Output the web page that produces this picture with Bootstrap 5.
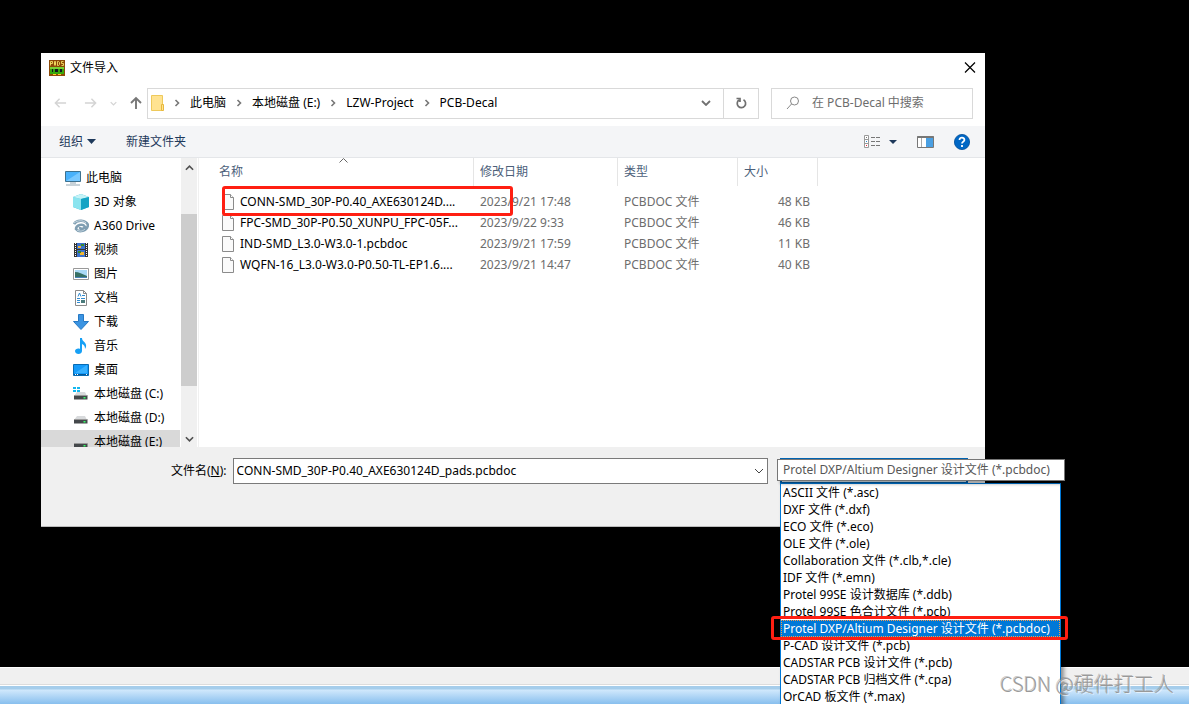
<!DOCTYPE html>
<html lang="zh-CN">
<head>
<meta charset="utf-8">
<meta name="viewport" content="width=device-width, initial-scale=1">
<title>文件导入</title>
<link href="https://cdn.jsdelivr.net/npm/bootstrap@5.3.0/dist/css/bootstrap.min.css" rel="stylesheet">
<style>
  body { font: 12px/16px "Noto Sans", "Noto Sans CJK SC", sans-serif; color: #000; background: #000; }
  svg { display: block; flex: none; }
  button { font: inherit; }
  .desktop { height: 100vh; }
  .import-window { margin: 53px 204px 0 41px; background: #fff; }
  .title-bar { height: 30px; padding: 0 8px; gap: 5px; }
  .nav-row { height: 43px; padding: 5px 12px 8px 13px; }
  .plain-btn { border: 0; padding: 0; background: none; color: inherit; }
  .nav-arrows { width: 93px; gap: 13px; }
  .address { border: 1px solid #d9d9d9; height: 31px; }
  .address .breadcrumb { gap: 10px; padding-left: 3px; }
  .address a, .tree a, .files a { color: inherit; text-decoration: none; }
  .address .refresh { width: 35px; border-left: 1px solid #d9d9d9; }
  .search { width: 202px; height: 31px; border: 1px solid #d9d9d9; margin-left: 12px; padding-left: 14px; gap: 12px; }
  .search input, .file-box input { min-width: 0; border: 0; outline: 0; padding: 0; background: none; font: inherit; color: #000; }
  .search input::placeholder { color: #6d6d6d; opacity: 1; }
  .command-bar { height: 32px; padding: 0 15px 0 18px; gap: 30px; background: #f4f5f7; border-bottom: 1px solid #e4e6e9; color: #1e395b; }
  .browser { height: 289px; }
  .tree-pane { flex: none; width: 139px; padding-top: 8px; }
  .tree a { height: 24px; padding-left: 32px; gap: 5px; white-space: nowrap; }
  .tree .root a { padding-left: 24px; }
  .tree .current { background: #d9d9d9; }
  .scroll-track { flex: none; width: 16px; background: #f0f0f0; margin: 0 1px; color: #505050; padding: 7px 0 5px; }
  .scroll-thumb { height: 172px; margin-top: 43px; background: #cdcdcd; }
  .file-pane { min-width: 0; border-left: 1px solid #f0f0f0; }
  .files { table-layout: fixed; width: 100%; color: #6d6d6d; }
  .files th { font-weight: 400; padding: 0 0 5px; color: #4c607a; }
  .files th span { display: block; height: 28px; padding: 6px 0 0 6px; border-right: 1px solid #e5e5e5; }
  .files th:first-child span { padding-left: 20px; }
  .files th:last-child span { border: 0; }
  .files td { height: 21px; padding: 0 0 0 6px; white-space: nowrap; }
  .files td:first-child { padding-left: 23px; color: #000; }
  .files td a { gap: 6px; }
  .files td.size { text-align: right; padding-right: 8px; }
  .col-name { width: 275px; } .col-date { width: 144px; } .col-type { width: 120px; } .col-size { width: 80px; }
  .sort-mark { top: 0; left: 140px; }
  .footer-bar { height: 80px; padding: 11px 17px 0 130px; background: #f0f0f0; border-bottom: 1px solid #bbb; }
  .footer-bar label { padding-top: 5px; }
  .file-box { height: 26px; border: 1px solid #7a7a7a; background: #fff; margin: 0 12px 0 6px; padding: 0 3px; }
  .filter { width: 188px; }
  .filter select { width: 100%; height: 26px; border: 2px solid #0063b1; background: #e5f1fb; font: inherit; appearance: none; border-radius: 0; padding: 0 4px; }
  .filter .dropdown-menu { top: 25px; left: 0; width: 281px; margin: 0; padding: 0; border: 1px solid #0078d7; border-radius: 0; font-size: 12px; color: #000; --bs-dropdown-item-padding-x: 2px; --bs-dropdown-item-padding-y: 0px; box-shadow: 3px 3px 4px #0006; }
  .filter .dropdown-item { height: 17px; line-height: 17px; color: #000; }
  .filter .dropdown-item.active { background: #0078d7; color: #fff; outline: 1px dotted #f79b4b; outline-offset: -1px; }
  .filter-tip { top: 1px; left: -3px; width: 288px; height: 22px; padding: 2px 5px; border: 1px solid #767676; background: #fff; color: #575757; white-space: nowrap; z-index: 1010; box-shadow: 3px 3px 3px #0005; }
  .callout { border: 3px solid #ff1f12; border-radius: 3px; pointer-events: none; z-index: 1020; }
  .callout-file { top: 28px; left: 23px; width: 291px; height: 30px; }
  .callout-type { top: 158px; left: -9px; width: 297px; height: 24px; }
  .under-status { height: 18px; background: #f0f0f0; border-top: 1px solid #fff; border-bottom: 1px solid #dcdcdc; }
  .under-task { height: 19px; background: linear-gradient(#fff 0 1px, #a5cdeb 1px 4px, #d0e8fc 5px, #88bfee); }
  .watermark { right: 15px; bottom: 8px; font: 20px/24px "Noto Sans CJK SC", sans-serif; font-weight: 300; color: #999; text-shadow: 1px 1px 0 #fff8, -1px -1px 0 #7776; z-index: 1030; }
</style>
</head>
<body>
<svg class="d-none" xmlns="http://www.w3.org/2000/svg">
  <symbol id="sep" viewBox="0 0 6 8"><path d="M1.500 1 4.500 4 1.500 7" fill="none" stroke="#777" stroke-width="1.600"/></symbol>
  <symbol id="doc" viewBox="0 0 12 16"><path d="M.5.500h8l3 3v12H.5z" fill="#fafafa" stroke="#8b8b8b"/><path d="M8.500.500v3h3" fill="#fff" stroke="#8b8b8b"/></symbol>
  <symbol id="chev" viewBox="0 0 10 6"><path d="m1 1 4 4 4-4" fill="none" stroke="currentColor" stroke-width="1.800"/></symbol>
  <symbol id="drive" viewBox="0 0 16 16"><path d="M4 6h8l2 4H1z" fill="#d8dadc"/><path d="M1 9.500h13.500v4H1z" fill="#44484b"/><path d="M1 9.500h13.500" stroke="#999"/><path d="M10.500 11h2v1.500h-2z" fill="#3f6"/></symbol>
</svg>
<div class="desktop d-flex flex-column position-relative overflow-hidden">
  <main class="import-window">
    <header class="title-bar d-flex align-items-center">
      <svg width="16" height="16" viewBox="0 0 16 16" role="img" aria-label="PADS"><path fill="#8d4a08" d="M0 0h16v16H0z"/><path d="M1.500 5.500v-4h2v2h-2M5.500 5.500v-4h1v4M5.500 3.500h1M8.500 1.500v4h1l1-1v-2l-1-1zM14.500 1.500h-2v2h2v2h-2" fill="none" stroke="#fff36d" stroke-width=".8"/><path d="M1 7h14v7H1z" fill="#36a80d"/><path d="M1 7h14v2H1z" fill="#77d335"/><path d="M3 9h1v3H3zM6 9h3v3H6zM11 9h2v3h-2z" fill="#101820"/><path d="M4 14h3v1H4zm5 0h3v1H9z" fill="#ffd22b"/></svg>
      <span>文件导入</span>
      <button class="plain-btn ms-auto" aria-label="关闭"><svg width="14" height="12" viewBox="0 0 14 12"><path d="m2 .500 10 10M12 .500l-10 10" stroke="#000" stroke-width="1.200"/></svg></button>
    </header>

    <div class="nav-row d-flex align-items-center">
      <nav class="nav-arrows d-flex align-items-center" aria-label="导航">
        <button class="plain-btn" aria-label="后退"><svg width="13" height="12" viewBox="0 0 14 12"><path d="M13 6H2M6 1.500 1.500 6 6 10.500" fill="none" stroke="#d4d4d4" stroke-width="1.600"/></svg></button>
        <button class="plain-btn ms-1" aria-label="前进"><svg width="13" height="12" viewBox="0 0 14 12"><path d="M1 6h11M8 1.500 12.500 6 8 10.500" fill="none" stroke="#d4d4d4" stroke-width="1.600"/></svg></button>
        <button class="plain-btn" aria-label="最近位置"><svg width="7" height="5" style="color:#d4d4d4"><use href="#chev"/></svg></button>
        <button class="plain-btn" aria-label="上移"><svg width="12" height="14" viewBox="0 0 12 14"><path d="M6 13V2M1 7l5-5 5 5" fill="none" stroke="#777" stroke-width="1.900"/></svg></button>
      </nav>
      <div class="address d-flex flex-fill align-items-stretch">
        <ol class="breadcrumb flex-fill align-items-center mb-0">
          <li><svg width="13" height="16" viewBox="0 0 13 16"><path d="M.5.500h11v15H.5z" fill="#ffe391" stroke="#eec95b"/><path d="M10.500 9.500h2v6h-2z" fill="#ffe391" stroke="#e8b93c"/></svg></li>
          <li><svg width="6" height="8"><use href="#sep"/></svg></li>
          <li><a href="#">此电脑</a></li>
          <li><svg width="6" height="8"><use href="#sep"/></svg></li>
          <li><a href="#">本地磁盘 (E:)</a></li>
          <li><svg width="6" height="8"><use href="#sep"/></svg></li>
          <li><a href="#">LZW-Project</a></li>
          <li><svg width="6" height="8"><use href="#sep"/></svg></li>
          <li><a href="#" aria-current="page">PCB-Decal</a></li>
        </ol>
        <button class="plain-btn px-2 me-1" aria-label="历史"><svg width="10" height="6" style="color:#707070"><use href="#chev"/></svg></button>
        <button class="refresh plain-btn d-flex align-items-center justify-content-center" aria-label="刷新"><svg width="12" height="12" viewBox="0 0 12 12"><path d="M8.500 2.800a4.200 4.200 0 1 1-4.500.200M1.500 1.500H5V5" fill="none" stroke="#707070" stroke-width="1.700"/></svg></button>
      </div>
      <div class="search d-flex align-items-center">
        <svg width="14" height="14" viewBox="0 0 14 14"><circle cx="8.500" cy="5" r="4" fill="none" stroke="#888"/><path d="M5.500 8 1 13" stroke="#888"/></svg>
        <input type="search" class="flex-fill" placeholder="在 PCB-Decal 中搜索" aria-label="搜索">
      </div>
    </div>

    <div class="command-bar d-flex align-items-center">
      <button class="plain-btn d-flex align-items-center gap-1">组织 <svg width="9" height="5" viewBox="0 0 9 5"><path d="M0 0h9L4.500 5z" fill="#1e395b"/></svg></button>
      <button class="plain-btn">新建文件夹</button>
      <div class="d-flex align-items-center ms-auto">
        <button class="plain-btn d-flex align-items-center gap-2" aria-label="更改视图">
          <svg width="17" height="13" viewBox="0 0 17 13"><path d="M.5.500h4v12h-4zM.5 4.500h4M.5 8.500h4" fill="#fff" stroke="#999"/><path d="M7 2.500h4m1 0h4M7 6.500h4m1 0h4M7 10.500h4m1 0h4" stroke="#777"/><path d="M2 2h1v1H2z" fill="#777"/><path d="M2 6h1v1H2z" fill="#2b8ad6"/><path d="M2 10h1v1H2z" fill="#e23"/></svg>
          <svg width="8" height="4" viewBox="0 0 8 4"><path d="M0 0h8L4 4z" fill="#1e395b"/></svg>
        </button>
        <button class="plain-btn mx-3 px-1" aria-label="预览窗格"><svg width="17" height="12" viewBox="0 0 17 12"><path d="M.5.500h16v11H.5z" fill="#fff" stroke="#777"/><path d="M.5 1h16" stroke="#777" stroke-width="2"/><path d="M4.500 2v9" stroke="#aaa"/><path d="M9 2h7v9H9z" fill="#4a9fe2"/></svg></button>
        <button class="plain-btn" aria-label="帮助"><svg width="16" height="16" viewBox="0 0 16 16"><circle cx="8" cy="8" r="7.600" fill="#0067c5" stroke="#004e98" stroke-width=".8"/><path d="M5.500 6C5.500 2.700 10.500 3 10.400 5.900 10.400 7.500 8 7.700 8 9.500M8 11v2" fill="none" stroke="#fff" stroke-width="1.800"/></svg></button>
      </div>
    </div>

    <div class="browser d-flex">
      <nav class="tree-pane overflow-hidden" aria-label="文件夹">
        <ul class="tree list-unstyled mb-0">
          <li class="root"><a href="#" class="d-flex align-items-center"><svg width="16" height="16" viewBox="0 0 16 16"><path d="M.5 1.500h15v10H.5z" fill="#48b1fb" stroke="#3d718f"/><path d="M1 11 15 2v9z" fill="#78c8ff"/><path d="M5 13h6M1 15h14" stroke="#92a6b2"/></svg>此电脑</a></li>
          <li><a href="#" class="d-flex align-items-center"><svg width="16" height="16" viewBox="0 0 16 16"><path d="m8 0 8 3v10l-8 3-8-3V3z" fill="#31bcd8"/><path d="m0 3 8 2v11l-8-3z" fill="#8be4ef"/><path d="m0 3 8-3 8 3-8 2z" fill="#c5f3f7"/><path d="m8 5 8-2v10l-8 3z" fill="#14a3c4"/></svg>3D 对象</a></li>
          <li><a href="#" class="d-flex align-items-center"><svg width="16" height="16" viewBox="0 0 16 16"><path d="M1 6c3-5 12-4 14 1-1 6-9 8-12 4 0-4 7-6 9-2-2 3-5 2-5 0" fill="none" stroke="#7f9eb2" stroke-width="2.600"/><path d="M1 5c4-3 9-3 12 0M4 12c3 2 6 1 8-1" fill="none" stroke="#c8d8e2"/></svg>A360 Drive</a></li>
          <li><a href="#" class="d-flex align-items-center"><svg width="16" height="16" viewBox="0 0 16 16"><path fill="#333" d="M1 1h14v14H1z"/><path d="M2.500 1v14M13.500 1v14" stroke="#fff" stroke-dasharray="1 1"/><path d="M4 1h8v6H4zm0 7h8v7H4z" fill="#3c72ce"/><path d="M5 4h3v2H5zm2 6h4v3H7z" fill="#f2b632"/><path d="M8 2h3v2H8zM5 9h3v2H5z" fill="#398b2f"/></svg>视频</a></li>
          <li><a href="#" class="d-flex align-items-center"><svg width="16" height="16" viewBox="0 0 16 16"><path d="M.5 2.500h15v11H.5z" fill="#fff" stroke="#999"/><path d="M2 4h12v8H2z" fill="#a9d9f6"/><path d="M2 6c4 0 7 2 12 4v2H2z" fill="#377065"/><path d="M2 11h12v1H2z" fill="#4a83ba"/></svg>图片</a></li>
          <li><a href="#" class="d-flex align-items-center"><svg width="16" height="16" viewBox="0 0 16 16"><path d="M2.500.500h8l3 3v12h-11z" fill="#fff" stroke="#8a8a8a"/><path d="M10.500.500v3h3" fill="none" stroke="#8a8a8a"/><path d="M5 6.500 6.500 3 8 6.500M9 5.500h3M4 8.500h3m1 0h4M4 10.500h3M4 12.500h3" fill="none" stroke="#318bd0"/><path d="M8 10h4v3H8z" fill="#497b7b"/></svg>文档</a></li>
          <li><a href="#" class="d-flex align-items-center"><svg width="16" height="16" viewBox="0 0 16 16"><path d="M5.500.500h5v7h5L8 15.500.5 7.500h5z" fill="#3b94e2" stroke="#2679c4"/></svg>下载</a></li>
          <li><a href="#" class="d-flex align-items-center"><svg width="16" height="16" viewBox="0 0 16 16"><path d="M7 0h2c0 4 5 4 4 9l-1 2c0-3-1-4-3-5v7c0 4-7 4-7 0 0-2 3-3 5-2z" fill="#16a0f5"/></svg>音乐</a></li>
          <li><a href="#" class="d-flex align-items-center"><svg width="16" height="16" viewBox="0 0 16 16"><path d="M.5 2.500h15v11H.5z" fill="#159bfa" stroke="#086bb3"/><path d="M2 11 14 3v8z" fill="#38b1ff"/><path d="M1 12.500h14" stroke="#075896"/><path d="M2 12.500h1m1 0h1m8 0h1" stroke="#fff"/></svg>桌面</a></li>
          <li><a href="#" class="d-flex align-items-center"><svg width="16" height="16" viewBox="0 0 16 16"><use href="#drive"/><path d="M0 1h3v2H0zm4 0h3v2H4zM0 4h3v2H0zm4 0h3v2H4z" fill="#12b7ef"/></svg>本地磁盘 (C:)</a></li>
          <li><a href="#" class="d-flex align-items-center"><svg width="16" height="16"><use href="#drive"/></svg>本地磁盘 (D:)</a></li>
          <li class="current"><a href="#" class="d-flex align-items-center"><svg width="16" height="16"><use href="#drive"/></svg>本地磁盘 (E:)</a></li>
        </ul>
      </nav>
      <div class="scroll-track d-flex flex-column" aria-hidden="true">
        <svg class="mx-auto" width="9" height="6" viewBox="0 0 10 6"><path d="m1 5 4-4 4 4" fill="none" stroke="currentColor" stroke-width="1.800"/></svg>
        <div class="scroll-thumb"></div>
        <svg class="mx-auto mt-auto" width="9" height="6"><use href="#chev"/></svg>
      </div>
      <section class="file-pane flex-fill position-relative">
        <svg class="sort-mark position-absolute" width="9" height="5" viewBox="0 0 9 5"><path d="m.5 4.500 4-4 4 4" fill="none" stroke="#666"/></svg>
        <table class="files">
          <colgroup><col class="col-name"><col class="col-date"><col class="col-type"><col class="col-size"><col></colgroup>
          <thead><tr><th scope="col"><span>名称</span></th><th scope="col"><span>修改日期</span></th><th scope="col"><span>类型</span></th><th scope="col"><span>大小</span></th><th><span></span></th></tr></thead>
          <tbody>
            <tr><td><a href="#" class="d-flex align-items-center"><svg width="12" height="16"><use href="#doc"/></svg>CONN-SMD_30P-P0.40_AXE630124D....</a></td><td>2023/9/21 17:48</td><td>PCBDOC 文件</td><td class="size">48 KB</td><td></td></tr>
            <tr><td><a href="#" class="d-flex align-items-center"><svg width="12" height="16"><use href="#doc"/></svg>FPC-SMD_30P-P0.50_XUNPU_FPC-05F...</a></td><td>2023/9/22 9:33</td><td>PCBDOC 文件</td><td class="size">46 KB</td><td></td></tr>
            <tr><td><a href="#" class="d-flex align-items-center"><svg width="12" height="16"><use href="#doc"/></svg>IND-SMD_L3.0-W3.0-1.pcbdoc</a></td><td>2023/9/21 17:59</td><td>PCBDOC 文件</td><td class="size">11 KB</td><td></td></tr>
            <tr><td><a href="#" class="d-flex align-items-center"><svg width="12" height="16"><use href="#doc"/></svg>WQFN-16_L3.0-W3.0-P0.50-TL-EP1.6....</a></td><td>2023/9/21 14:47</td><td>PCBDOC 文件</td><td class="size">40 KB</td><td></td></tr>
          </tbody>
        </table>
        <div class="callout callout-file position-absolute"></div>
      </section>
    </div>

    <footer class="footer-bar d-flex align-items-start">
      <label for="fileName">文件名(<u>N</u>):</label>
      <div class="file-box d-flex flex-fill align-items-center">
        <input id="fileName" class="flex-fill" type="text" value="CONN-SMD_30P-P0.40_AXE630124D_pads.pcbdoc">
        <button class="plain-btn" aria-label="展开"><svg width="10" height="6" viewBox="0 0 10 6"><path d="m1 1 4 4 4-4" fill="none" stroke="#444"/></svg></button>
      </div>
      <div class="filter position-relative">
        <select aria-label="文件类型"><option>Protel DXP/Altium Designer 设计文件 (*.pcbdoc)</option></select>
        <div class="filter-tip position-absolute" role="tooltip">Protel DXP/Altium Designer 设计文件 (*.pcbdoc)</div>
        <ul class="dropdown-menu show">
          <li><button class="dropdown-item">ASCII 文件 (*.asc)</button></li>
          <li><button class="dropdown-item">DXF 文件 (*.dxf)</button></li>
          <li><button class="dropdown-item">ECO 文件 (*.eco)</button></li>
          <li><button class="dropdown-item">OLE 文件 (*.ole)</button></li>
          <li><button class="dropdown-item">Collaboration 文件 (*.clb,*.cle)</button></li>
          <li><button class="dropdown-item">IDF 文件 (*.emn)</button></li>
          <li><button class="dropdown-item">Protel 99SE 设计数据库 (*.ddb)</button></li>
          <li><button class="dropdown-item">Protel 99SE 色合计文件 (*.pcb)</button></li>
          <li><button class="dropdown-item active">Protel DXP/Altium Designer 设计文件 (*.pcbdoc)</button></li>
          <li><button class="dropdown-item">P-CAD 设计文件 (*.pcb)</button></li>
          <li><button class="dropdown-item">CADSTAR PCB 设计文件 (*.pcb)</button></li>
          <li><button class="dropdown-item">CADSTAR PCB 归档文件 (*.cpa)</button></li>
          <li><button class="dropdown-item">OrCAD 板文件 (*.max)</button></li>
        </ul>
        <div class="callout callout-type position-absolute"></div>
      </div>
    </footer>
  </main>
  <div class="under-status mt-auto"></div>
  <div class="under-task"></div>
  <div class="watermark position-absolute">CSDN @硬件打工人</div>
</div>
<script src="https://cdn.jsdelivr.net/npm/bootstrap@5.3.0/dist/js/bootstrap.bundle.min.js"></script>
</body>
</html>
